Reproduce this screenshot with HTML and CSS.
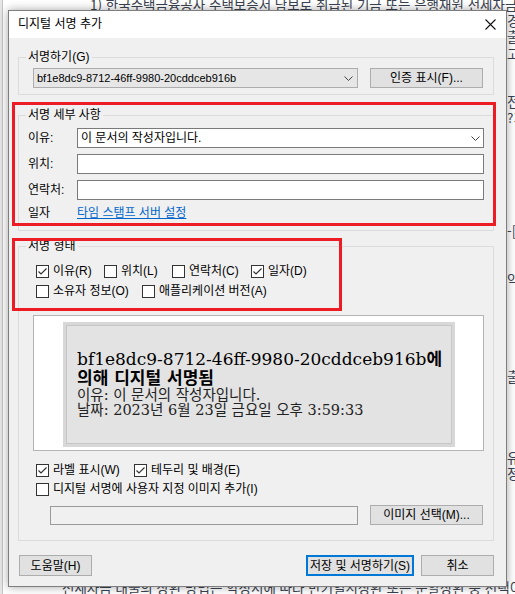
FILE: index.html
```html
<!DOCTYPE html>
<html lang="ko">
<head>
<meta charset="utf-8">
<title>디지털 서명 추가</title>
<link rel="stylesheet" href="styles.css">
</head>
<body>
<div class="page">
  <div class="doc">
    <div class="ln">1) 한국주택금융공사 주택보증서 담보로 취급된 기금 또는 은행재원 전세자금 대출 중 일부를</div>
    <div class="ln edge">경과</div>
    <div class="ln edge">출자</div>
    <div class="ln edge">고지</div>
    <div class="ln"></div>
    <div class="ln"></div>
    <div class="ln edge">전,</div>
    <div class="ln edge">?가</div>
    <div class="ln"></div>
    <div class="ln"></div>
    <div class="ln"></div>
    <div class="ln"></div>
    <div class="ln"></div>
    <div class="ln"></div>
    <div class="ln edge">-[참</div>
    <div class="ln"></div>
    <div class="ln"></div>
    <div class="ln edge">약정</div>
    <div class="ln"></div>
    <div class="ln"></div>
    <div class="ln"></div>
    <div class="ln"></div>
    <div class="ln"></div>
    <div class="ln edge">출금</div>
    <div class="ln"></div>
    <div class="ln"></div>
    <div class="ln"></div>
    <div class="ln"></div>
    <div class="ln edge">유의</div>
    <div class="ln edge">정정</div>
    <div class="ln"></div>
    <div class="ln"></div>
    <div class="ln"></div>
    <div class="ln"></div>
    <div class="ln"></div>
    <div class="ln"></div>
    <div class="ln last">전세자금 대출의 상환 방법은 약정서에 따라 만기일시상환 또는 분할상환 중 선택이 가능합니다 가</div>
  </div>

  <div class="dialog">
    <div class="titlebar">
      <span class="title">디지털 서명 추가</span>
      <svg class="close" width="11" height="11" viewBox="0 0 11 11"><path d="M0.5 0.5 L10.5 10.5 M10.5 0.5 L0.5 10.5" stroke="#111" stroke-width="1.1" fill="none"/></svg>
    </div>
    <div class="body">
      <fieldset class="group g1">
        <legend>서명하기(G)</legend>
        <div class="signer-row">
          <div class="select readonly">
            <span class="sel-text">bf1e8dc9-8712-46ff-9980-20cddceb916b</span>
            <svg class="chev" width="9" height="5" viewBox="0 0 9 5"><polyline points="0.5,0.5 4.5,4.5 8.5,0.5" stroke="#444" fill="none"/></svg>
          </div>
          <div class="btn w113">인증 표시(F)...</div>
        </div>
      </fieldset>

      <fieldset class="group g2">
        <legend>서명 세부 사항</legend>
        <div class="details">
          <span class="lbl">이유:</span>
          <div class="select editable">
            <span class="sel-text">이 문서의 작성자입니다.</span>
            <svg class="chev" width="9" height="5" viewBox="0 0 9 5"><polyline points="0.5,0.5 4.5,4.5 8.5,0.5" stroke="#444" fill="none"/></svg>
          </div>
          <span class="lbl">위치:</span>
          <div class="input"></div>
          <span class="lbl">연락처:</span>
          <div class="input"></div>
          <span class="lbl">일자</span>
          <a class="link" href="#">타임 스탬프 서버 설정</a>
        </div>
      </fieldset>

      <fieldset class="group g3">
        <legend>서명 형태</legend>
        <div class="cbrow r1">
          <label class="cb"><span class="box"><svg width="11" height="11" viewBox="0 0 11 11"><polyline points="1.5,5.5 4,8 9.5,2.5" stroke="#333" stroke-width="1.2" fill="none"/></svg></span>이유(R)</label>
          <label class="cb"><span class="box"></span>위치(L)</label>
          <label class="cb"><span class="box"></span>연락처(C)</label>
          <label class="cb"><span class="box"><svg width="11" height="11" viewBox="0 0 11 11"><polyline points="1.5,5.5 4,8 9.5,2.5" stroke="#333" stroke-width="1.2" fill="none"/></svg></span>일자(D)</label>
        </div>
        <div class="cbrow r2">
          <label class="cb"><span class="box"></span>소유자 정보(O)</label>
          <label class="cb"><span class="box"></span>애플리케이션 버전(A)</label>
        </div>

        <div class="preview">
          <div class="sigbox">
            <div class="s1">bf1e8dc9-8712-46ff-9980-20cddceb916b<b>에</b></div>
            <div class="s2">의해 디지털 서명됨</div>
            <div class="s3">이유: 이 문서의 작성자입니다.</div>
            <div class="s4">날짜: 2023년 6월 23일 금요일 오후 3:59:33</div>
          </div>
        </div>

        <div class="cbrow r3">
          <label class="cb"><span class="box"><svg width="11" height="11" viewBox="0 0 11 11"><polyline points="1.5,5.5 4,8 9.5,2.5" stroke="#333" stroke-width="1.2" fill="none"/></svg></span>라벨 표시(W)</label>
          <label class="cb"><span class="box"><svg width="11" height="11" viewBox="0 0 11 11"><polyline points="1.5,5.5 4,8 9.5,2.5" stroke="#333" stroke-width="1.2" fill="none"/></svg></span>테두리 및 배경(E)</label>
        </div>
        <div class="cbrow r4">
          <label class="cb"><span class="box"></span>디지털 서명에 사용자 지정 이미지 추가(I)</label>
        </div>
        <div class="image-row">
          <div class="input disabled"></div>
          <div class="btn w113">이미지 선택(M)...</div>
        </div>
      </fieldset>

      <div class="footer">
        <div class="btn w73">도움말(H)</div>
        <div class="footer-right">
          <div class="btn default">저장 및 서명하기(S)</div>
          <div class="btn w73">취소</div>
        </div>
      </div>
    </div>

    <div class="redbox rb1"></div>
    <div class="redbox rb2"></div>
  </div>
</div>
</body>
</html>
```

FILE: styles.css
```css
html, body {
  margin: 0;
  padding: 0;
}

body {
  width: 515px;
  height: 594px;
  overflow: hidden;
  background: #fff;
  font-family: "Liberation Sans", "Noto Sans CJK KR", sans-serif;
}

.page {
  position: relative;
  width: 515px;
  height: 594px;
  overflow: hidden;
  background: linear-gradient(to right, #e6e6e6 0, #e6e6e6 2px, #c4c4c4 2px, #c4c4c4 3px, #fff 3px);
}

/* background document */
.doc {
  margin-top: -4px;
  padding-left: 90px;
  font-family: "Noto Sans CJK KR", sans-serif;
  font-size: 13.5px;
  line-height: 16.2px;
  color: #3a4250;
  white-space: nowrap;
}

.doc .ln {
  height: 16.2px;
}

.doc .edge {
  padding-left: 417px;
}

.doc .last {
  margin-left: -28px;
}

/* dialog window */
.dialog {
  position: absolute;
  left: 8px;
  top: 10px;
  width: 499px;
  height: 577px;
  box-sizing: border-box;
  border: 1px solid #7e7e7e;
  background: #f0f0f0;
  box-shadow: 0 0 9px rgba(0, 0, 0, 0.35);
  font-size: 12px;
  color: #000;
}

.titlebar {
  height: 27px;
  box-sizing: border-box;
  background: #fff;
  display: flex;
  align-items: center;
  justify-content: space-between;
  padding: 0 10px 3px 9px;
}

.title {
  font-family: "Noto Sans CJK KR", sans-serif;
  font-size: 12px;
  line-height: 16px;
}

.close {
  display: block;
  margin-top: 3px;
}

.body {
  padding: 11px 12px 10px 9px;
}

/* group boxes */
.group {
  margin: 0;
  border: 1px solid #dcdcdc;
  padding: 3px 9px 6px 9px;
  min-width: 0;
}

.group legend {
  padding: 0 2px;
  margin-left: -2px;
  line-height: 16px;
  font-size: 12px;
}

.g2 {
  margin-top: 12px;
  padding: 5px 9px 10px 9px;
}

.g3 {
  margin-top: 7px;
  padding: 9px 9px 15px 9px;
}

.signer-row {
  display: flex;
  gap: 12px;
  margin-left: 5px;
}

.select {
  height: 20px;
  box-sizing: border-box;
  display: flex;
  align-items: center;
  justify-content: space-between;
  padding: 0 4px 0 3px;
  line-height: 16px;
}

.select.readonly {
  width: 325px;
  background: #e6e6e6;
  border: 1px solid #adadad;
}

.select.readonly .sel-text {
  font-size: 11px;
}

.select.editable {
  background: #fff;
  border: 1px solid #7a7a7a;
  padding-right: 3px;
}

.chev {
  display: block;
}

.btn {
  height: 20px;
  box-sizing: border-box;
  background: #e1e1e1;
  border: 1px solid #adadad;
  display: flex;
  align-items: center;
  justify-content: center;
  line-height: 16px;
  white-space: nowrap;
}

.w113 {
  width: 113px;
}

.w73 {
  width: 73px;
  height: 21px;
}

.btn.default {
  width: 108px;
  height: 21px;
  border: 2px solid #0078d7;
}

/* details grid */
.details {
  display: grid;
  grid-template-columns: 49px 1fr;
  grid-template-rows: 20px 20px 20px 14px;
  row-gap: 6px;
  align-items: center;
}

.lbl {
  line-height: 16px;
}

.input {
  height: 20px;
  box-sizing: border-box;
  background: #fff;
  border: 1px solid #7a7a7a;
}

.link {
  color: #0066cc;
  text-decoration: underline;
  line-height: 14px;
  justify-self: start;
}

/* checkboxes */
.cbrow {
  display: grid;
  margin-left: 8px;
  height: 16px;
}

.r1 {
  grid-template-columns: 68px 68px 79px auto;
}

.r2 {
  margin-top: 4px;
  grid-template-columns: 106px auto;
}

.r3 {
  margin-top: 11px;
  grid-template-columns: 98px auto;
}

.r4 {
  margin-top: 3px;
  grid-template-columns: auto;
}

.cb {
  display: flex;
  align-items: center;
  gap: 4px;
  line-height: 16px;
  white-space: nowrap;
}

.box {
  width: 13px;
  height: 13px;
  box-sizing: border-box;
  border: 1px solid #333;
  background: #fff;
  flex: none;
}

.box svg {
  display: block;
}

/* signature preview */
.preview {
  margin-top: 16px;
  margin-left: 5px;
  width: 451px;
  height: 136px;
  box-sizing: border-box;
  border: 1px solid #b4b4b4;
  background: #fff;
  padding: 6px 0 0 29px;
}

.sigbox {
  width: 392px;
  height: 125px;
  box-sizing: border-box;
  background: #e3e3e3;
  border: 3px solid #d8d8d8;
  box-shadow: inset 0 0 0 1px #c6c6c6;
  padding: 25px 0 0 11px;
  font-family: "DejaVu Serif", "Noto Sans CJK KR", serif;
  color: #000;
  white-space: nowrap;
}

.s1 {
  font-size: 17px;
  line-height: 19px;
}

.s1 b {
  font-weight: bold;
}

.s2 {
  font-size: 17px;
  line-height: 19px;
  font-weight: bold;
}

.s3 {
  font-size: 14.5px;
  line-height: 15px;
  color: #222;
}

.s4 {
  font-size: 14.5px;
  line-height: 15px;
  color: #222;
}

.image-row {
  display: flex;
  align-items: center;
  gap: 12px;
  margin-top: 8px;
  margin-left: 22px;
}

.input.disabled {
  width: 308px;
  height: 19px;
  background: #f0f0f0;
  border: 1px solid #9a9a9a;
}

/* footer */
.footer {
  margin-top: 14px;
  padding-left: 1px;
  display: flex;
  justify-content: space-between;
}

.footer-right {
  display: flex;
  gap: 7px;
}

/* annotation overlays */
.redbox {
  position: absolute;
  box-sizing: border-box;
  border: 3px solid #ed1c24;
  pointer-events: none;
}

.rb1 {
  left: 3px;
  top: 91px;
  width: 484px;
  height: 124px;
}

.rb2 {
  left: 3px;
  top: 227px;
  width: 330px;
  height: 73px;
}
```
